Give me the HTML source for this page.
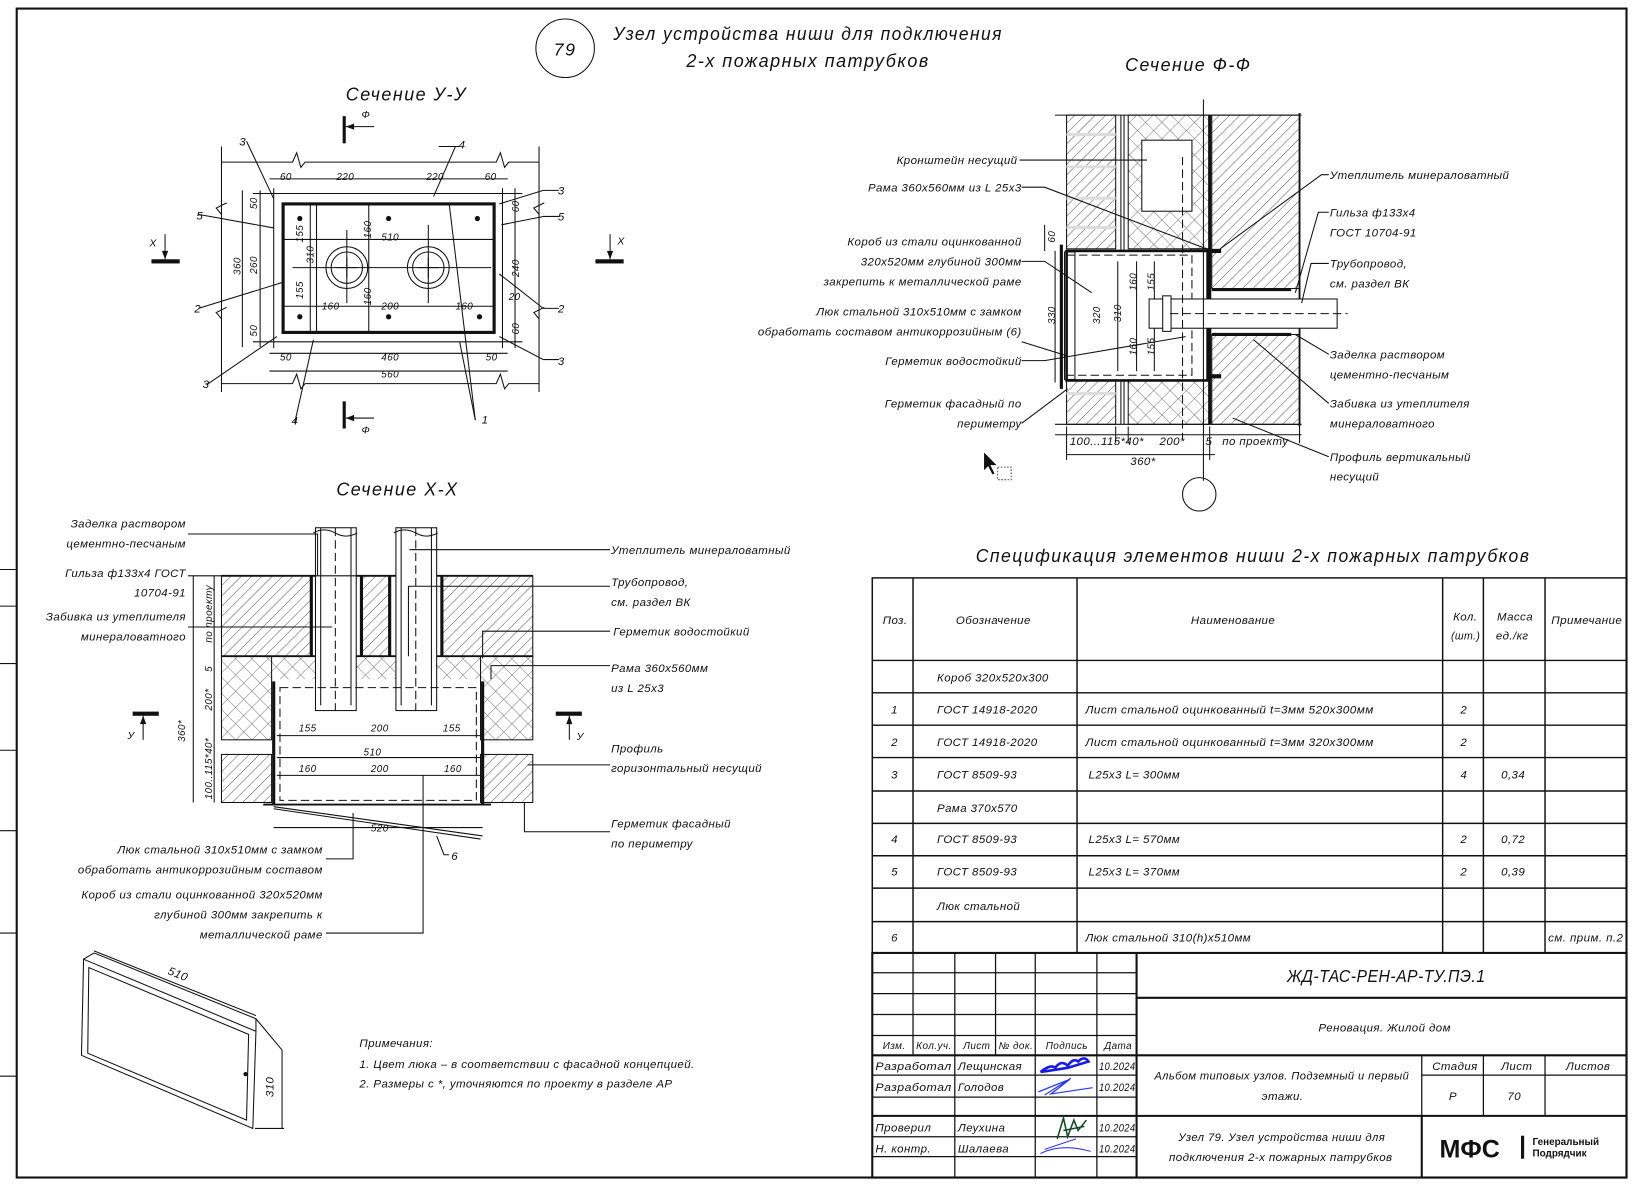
<!DOCTYPE html>
<html><head><meta charset="utf-8"><style>
html,body{margin:0;padding:0;background:#fff;}
svg{display:block;}
text{font-family:"Liberation Sans","DejaVu Sans",sans-serif;font-style:italic;fill:#111;letter-spacing:0.4px;}
.t{font-size:11px;}
.s{font-size:10px;}
.d{font-size:9.5px;}
.h{font-size:18px;letter-spacing:1.5px;}
.ln{stroke:#111;stroke-width:1;fill:none;}
.th{stroke:#111;stroke-width:3;fill:none;}
.md{stroke:#111;stroke-width:1.8;fill:none;}
.dash{stroke:#111;stroke-width:1;fill:none;stroke-dasharray:8 4;}
</style></head><body>
<svg width="1638" height="1184" viewBox="0 0 1568 1133" xmlns="http://www.w3.org/2000/svg">
<defs>
<pattern id="hh" width="7" height="7" patternUnits="userSpaceOnUse" patternTransform="rotate(45)"><line x1="0" y1="0" x2="0" y2="7" stroke="#333" stroke-width="0.8"/></pattern>
<pattern id="xx" width="11" height="11" patternUnits="userSpaceOnUse" patternTransform="rotate(45)"><line x1="0" y1="0" x2="0" y2="11" stroke="#444" stroke-width="0.7"/><line x1="0" y1="0" x2="11" y2="0" stroke="#444" stroke-width="0.7"/></pattern>
</defs>
<rect width="1568" height="1133" fill="#fff"/>
<rect x="16" y="8" width="1541" height="1119" fill="none" stroke="#111" stroke-width="2"/>
<g class="ln"><line x1="0" y1="545" x2="16" y2="545"/><line x1="0" y1="580" x2="16" y2="580"/><line x1="0" y1="635" x2="16" y2="635"/><line x1="0" y1="718" x2="16" y2="718"/><line x1="0" y1="795" x2="16" y2="795"/><line x1="0" y1="893" x2="16" y2="893"/><line x1="0" y1="1030" x2="16" y2="1030"/></g>

<circle cx="541" cy="46" r="28" class="ln"/>
<text x="530" y="53" class="h" style="font-size:17px">79</text>
<text x="587" y="38" class="h" textLength="373" lengthAdjust="spacingAndGlyphs">Узел устройства ниши для подключения</text>
<text x="657" y="64" class="h" textLength="233" lengthAdjust="spacingAndGlyphs">2-х пожарных патрубков</text>
<text x="331" y="96" class="h" textLength="116" lengthAdjust="spacingAndGlyphs">Сечение У-У</text>
<text x="1077" y="68" class="h" textLength="121" lengthAdjust="spacingAndGlyphs">Сечение Ф-Ф</text>
<text x="322" y="474" class="h" textLength="117" lengthAdjust="spacingAndGlyphs">Сечение Х-Х</text>
<text x="934" y="538" class="h" textLength="531" lengthAdjust="spacingAndGlyphs">Спецификация элементов ниши 2-х пожарных патрубков</text>

<g>
<line x1="212" y1="140" x2="212" y2="375" class="ln"/><line x1="516" y1="140" x2="516" y2="375" class="ln"/>
<path d="M212 155 H280 l4 -9 l4 14 l4 -5 H475 l4 -9 l4 14 l4 -5 H516" class="ln"/>
<path d="M212 367 H280 l4 -9 l4 14 l4 -5 H475 l4 -9 l4 14 l4 -5 H516" class="ln"/>
<path d="M212 205 l-5 -6 l10 -5" class="ln"/><path d="M516 205 l-5 -6 l10 -5" class="ln"/>
<path d="M212 305 l-5 -6 l10 -5" class="ln"/><path d="M516 305 l-5 -6 l10 -5" class="ln"/>
<rect x="271" y="195" width="202" height="123" class="th"/>
<line x1="242" y1="185" x2="500" y2="185" class="ln"/><line x1="242" y1="327" x2="500" y2="327" class="ln"/>
<line x1="262" y1="180" x2="262" y2="333" class="ln"/><line x1="481" y1="180" x2="481" y2="333" class="ln"/>
<circle cx="332" cy="256" r="20" class="ln"/><circle cx="332" cy="256" r="15" class="ln"/>
<circle cx="410" cy="256" r="20" class="ln"/><circle cx="410" cy="256" r="15" class="ln"/>
<line x1="322" y1="256" x2="342" y2="256" class="ln"/><line x1="332" y1="246" x2="332" y2="266" class="ln"/>
<line x1="400" y1="256" x2="420" y2="256" class="ln"/><line x1="410" y1="246" x2="410" y2="266" class="ln"/>
<line x1="332" y1="220" x2="332" y2="290" class="ln"/><line x1="410" y1="215" x2="410" y2="290" class="ln"/>
<line x1="280" y1="256" x2="470" y2="256" class="ln"/>
<line x1="272" y1="229" x2="472" y2="229" class="ln"/><line x1="272" y1="293" x2="472" y2="293" class="ln"/>
<line x1="258" y1="171" x2="486" y2="171" class="ln"/>
<line x1="258" y1="338" x2="486" y2="338" class="ln"/><line x1="258" y1="355" x2="486" y2="355" class="ln"/>
<line x1="232" y1="182" x2="232" y2="332" class="ln"/><line x1="249" y1="182" x2="249" y2="332" class="ln"/>
<line x1="297" y1="195" x2="297" y2="318" class="ln"/><line x1="303" y1="195" x2="303" y2="318" class="ln"/>
<line x1="353" y1="195" x2="353" y2="318" class="ln"/><line x1="493" y1="180" x2="493" y2="333" class="ln"/>
<g fill="#111"><circle cx="287" cy="209" r="2.5"/><circle cx="372" cy="209" r="2.5"/><circle cx="457" cy="209" r="2.5"/><circle cx="287" cy="303" r="2.5"/><circle cx="372" cy="303" r="2.5"/><circle cx="459" cy="303" r="2.5"/></g>
<g class="d"><text x="268" y="172">60</text><text x="322" y="172">220</text><text x="408" y="172">220</text><text x="464" y="172">60</text>
<text x="365" y="230">510</text><text x="308" y="296">160</text><text x="365" y="296">200</text><text x="436" y="296">160</text>
<text x="365" y="345">460</text><text x="365" y="361">560</text><text x="268" y="345">50</text><text x="465" y="345">50</text>
<text x="487" y="287">20</text></g>
<g class="d"><text transform="translate(230,263) rotate(-90)">360</text><text transform="translate(246,262) rotate(-90)">260</text><text transform="translate(246,200) rotate(-90)">50</text><text transform="translate(246,322) rotate(-90)">50</text>
<text transform="translate(300,252) rotate(-90)">310</text><text transform="translate(290,232) rotate(-90)">155</text><text transform="translate(290,286) rotate(-90)">155</text>
<text transform="translate(355,228) rotate(-90)">160</text><text transform="translate(355,292) rotate(-90)">160</text>
<text transform="translate(497,265) rotate(-90)">240</text><text transform="translate(497,203) rotate(-90)">60</text><text transform="translate(497,320) rotate(-90)">60</text></g>
<g class="ln"><path d="M236 135 L262 190"/><path d="M190 205 L262 218"/><path d="M190 295 L271 270"/><path d="M198 368 L265 322"/><path d="M282 405 L300 325"/>
<path d="M420 140 H440 M436 140 L415 188"/><path d="M455 402 L440 327"/><path d="M455 402 L430 195"/>
<path d="M520 182 H535 M520 182 L478 195"/><path d="M520 207 H535 M520 207 L480 215"/><path d="M520 295 H535 M520 295 L478 262"/><path d="M520 344 H535 M520 344 L478 322"/></g>
<g class="t"><text x="229" y="139">3</text><text x="188" y="210">5</text><text x="186" y="299">2</text><text x="194" y="371">3</text><text x="279" y="406">4</text><text x="439" y="142">4</text><text x="461" y="405">1</text>
<text x="534" y="186">3</text><text x="534" y="211">5</text><text x="534" y="299">2</text><text x="534" y="349">3</text></g>
<rect x="328" y="111" width="3" height="26" fill="#111"/><path d="M331 121 H358" class="ln"/><path d="M331 121 l8 -3 v6z" fill="#111"/><text x="346" y="113" class="s">Ф</text>
<rect x="328" y="384" width="3" height="26" fill="#111"/><path d="M331 400 H358" class="ln"/><path d="M331 400 l8 -3 v6z" fill="#111"/><text x="346" y="415" class="s">Ф</text>
<rect x="145" y="248" width="27" height="4" fill="#111"/><path d="M158 224 V248" class="ln"/><path d="M158 248 l-3 -8 h6z" fill="#111"/><text x="143" y="236" class="s">Х</text>
<rect x="570" y="248" width="27" height="4" fill="#111"/><path d="M584 224 V248" class="ln"/><path d="M584 248 l-3 -8 h6z" fill="#111"/><text x="591" y="234" class="s">Х</text>
</g>

<g>
<rect x="1021" y="110" width="47" height="128" fill="url(#hh)" stroke="#111"/>
<rect x="1021" y="362" width="47" height="44" fill="url(#hh)" stroke="#111"/>
<g fill="#ddd"><rect x="1021" y="127" width="47" height="3"/><rect x="1021" y="158" width="47" height="3"/><rect x="1021" y="188" width="47" height="3"/><rect x="1021" y="216" width="47" height="3"/><rect x="1021" y="375" width="47" height="3"/></g>
<rect x="1080" y="110" width="78" height="128" fill="url(#xx)" stroke="#111"/>
<rect x="1140" y="238" width="18" height="124" fill="url(#xx)" stroke="#111"/>
<rect x="1080" y="362" width="78" height="44" fill="url(#xx)" stroke="#111"/>
<rect x="1093" y="134" width="48" height="68" fill="#fff" stroke="#111"/>
<rect x="1160" y="110" width="84" height="166" fill="url(#hh)" stroke="#111"/>
<rect x="1160" y="320" width="84" height="86" fill="url(#hh)" stroke="#111"/>
<rect x="1160" y="276" width="76" height="44" fill="#fff"/>
<line x1="1158" y1="110" x2="1158" y2="406" class="th"/>
<line x1="1160" y1="277" x2="1236" y2="277" class="th"/><line x1="1160" y1="320" x2="1236" y2="320" class="th"/>
<line x1="1073" y1="110" x2="1073" y2="406" class="ln"/><line x1="1076" y1="110" x2="1076" y2="406" class="ln"/>
<line x1="1010" y1="110" x2="1246" y2="110" class="ln"/><line x1="1010" y1="406" x2="1246" y2="406" class="ln"/>
<line x1="1244" y1="108" x2="1244" y2="408" class="md"/>
<rect x="1021" y="240" width="135" height="124" fill="#fff" stroke="#111" stroke-width="2.5"/>
<rect x="1021" y="244" width="120" height="115" class="dash"/>
<line x1="1016" y1="234" x2="1016" y2="372" class="th"/>
<rect x="1019" y="241" width="10" height="122" class="ln"/>
<line x1="1105" y1="250" x2="1105" y2="355" class="ln"/><line x1="1088" y1="250" x2="1088" y2="355" class="ln"/><line x1="1070" y1="250" x2="1070" y2="355" class="ln"/>
<rect x="1100" y="286" width="180" height="28" fill="#fff" stroke="#111"/>
<rect x="1113" y="283" width="8" height="34" fill="#fff" stroke="#111"/>
<path d="M1120 300 H1290" class="dash"/>
<line x1="1132" y1="150" x2="1132" y2="420" class="dash"/>
<line x1="1152" y1="95" x2="1152" y2="460" class="ln"/>
<g fill="#111"><rect x="1155" y="238" width="14" height="4"/><rect x="1155" y="358" width="14" height="4"/></g>
<line x1="1010" y1="416" x2="1246" y2="416" class="ln"/><line x1="1021" y1="435" x2="1163" y2="435" class="ln"/>
<g class="ln"><line x1="1021" y1="408" x2="1021" y2="440"/><line x1="1068" y1="408" x2="1068" y2="424"/><line x1="1080" y1="408" x2="1080" y2="424"/><line x1="1158" y1="408" x2="1158" y2="440"/><line x1="1244" y1="408" x2="1244" y2="424"/></g>
<g class="t"><text x="1024" y="426">100...115*40*</text><text x="1110" y="426">200*</text><text x="1154" y="426">5</text><text x="1170" y="426">по проекту</text><text x="1082" y="445">360*</text></g>
<line x1="1010" y1="240" x2="1010" y2="366" class="ln"/><line x1="1000" y1="215" x2="1000" y2="240" class="ln"/>
<g class="d"><text transform="translate(1010,232) rotate(-90)">60</text><text transform="translate(1010,310) rotate(-90)">330</text><text transform="translate(1053,310) rotate(-90)">320</text><text transform="translate(1073,308) rotate(-90)">310</text>
<text transform="translate(1088,278) rotate(-90)">160</text><text transform="translate(1105,278) rotate(-90)">155</text><text transform="translate(1088,340) rotate(-90)">160</text><text transform="translate(1105,340) rotate(-90)">155</text></g>
<circle cx="1148" cy="473" r="16" class="ln"/>
<g class="ln"><path d="M976 153 H1098"/><path d="M978 179 H1000 L1160 240"/><path d="M978 250 H1000 L1045 280"/><path d="M978 327 L1020 340"/><path d="M978 345 H1000 L1135 322"/><path d="M978 405 L1022 372"/>
<path d="M1272 167 H1265 L1168 238"/><path d="M1272 203 H1262 L1240 280"/><path d="M1272 252 H1255 L1246 290"/><path d="M1272 339 L1240 320"/><path d="M1272 386 L1200 325"/><path d="M1272 437 L1180 400"/></g>
<g class="t" text-anchor="end"><text x="974" y="157">Кронштейн несущий</text><text x="978" y="183">Рама 360х560мм из L 25х3</text>
<text x="978" y="235">Короб из стали оцинкованной</text><text x="978" y="254">320х520мм глубиной 300мм</text><text x="978" y="273">закрепить к металлической раме</text>
<text x="978" y="302">Люк стальной 310х510мм с замком</text><text x="978" y="321">обработать составом антикоррозийным (6)</text>
<text x="978" y="349">Герметик водостойкий</text><text x="978" y="390">Герметик фасадный по</text><text x="978" y="409">периметру</text></g>
<g class="t"><text x="1273" y="171">Утеплитель минераловатный</text><text x="1273" y="207">Гильза ф133х4</text><text x="1273" y="226">ГОСТ 10704-91</text>
<text x="1273" y="256">Трубопровод,</text><text x="1273" y="275">см. раздел ВК</text><text x="1273" y="343">Заделка раствором</text><text x="1273" y="362">цементно-песчаным</text>
<text x="1273" y="390">Забивка из утеплителя</text><text x="1273" y="409">минераловатного</text><text x="1273" y="441">Профиль вертикальный</text><text x="1273" y="460">несущий</text></g>
<path d="M942 433 l0 17 l4 -4 l4 8 l2 -1 l-4 -8 l6 0z" fill="#111"/>
<rect x="955" y="447" width="13" height="12" fill="none" stroke="#555" stroke-dasharray="1.5 1.5"/>
</g>

<g>
<rect x="212" y="551" width="86" height="77" fill="url(#hh)" stroke="#111"/>
<rect x="346" y="551" width="27" height="77" fill="url(#hh)" stroke="#111"/>
<rect x="423" y="551" width="87" height="77" fill="url(#hh)" stroke="#111"/>
<rect x="212" y="628" width="48" height="80" fill="url(#xx)" stroke="#111"/>
<rect x="460" y="628" width="50" height="80" fill="url(#xx)" stroke="#111"/>
<rect x="260" y="628" width="42" height="22" fill="url(#xx)"/><rect x="341" y="628" width="38" height="22" fill="url(#xx)"/><rect x="418" y="628" width="42" height="22" fill="url(#xx)"/>
<rect x="212" y="722" width="48" height="46" fill="url(#hh)" stroke="#111"/>
<rect x="460" y="722" width="50" height="46" fill="url(#hh)" stroke="#111"/>
<line x1="212" y1="628" x2="510" y2="628" class="md"/>
<line x1="212" y1="551" x2="510" y2="551" class="md"/>
<line x1="298" y1="551" x2="298" y2="628" class="th"/><line x1="346" y1="551" x2="346" y2="628" class="th"/><line x1="373" y1="551" x2="373" y2="628" class="th"/><line x1="423" y1="551" x2="423" y2="628" class="th"/>
<rect x="302" y="505" width="39" height="175" fill="#fff" stroke="#111"/><rect x="379" y="505" width="39" height="175" fill="#fff" stroke="#111"/>
<line x1="307" y1="505" x2="307" y2="675" class="ln"/><line x1="336" y1="505" x2="336" y2="675" class="ln"/><line x1="384" y1="505" x2="384" y2="675" class="ln"/><line x1="413" y1="505" x2="413" y2="675" class="ln"/>
<line x1="321" y1="505" x2="321" y2="680" class="dash"/><line x1="398" y1="505" x2="398" y2="680" class="dash"/>
<path d="M300 510 q10 -6 21 0 q10 6 21 0" class="ln"/><path d="M377 510 q10 -6 21 0 q10 6 21 0" class="ln"/>
<line x1="262" y1="652" x2="262" y2="770" class="th"/><line x1="462" y1="652" x2="462" y2="770" class="th"/>
<rect x="268" y="658" width="188" height="108" class="dash"/>
<line x1="252" y1="770" x2="470" y2="770" class="md"/>
<path d="M262 772 L462 800" class="ln"/><path d="M262 774 L460 803" class="ln"/>
<g class="ln"><line x1="265" y1="704" x2="460" y2="704"/><line x1="265" y1="725" x2="460" y2="725"/><line x1="265" y1="742" x2="460" y2="742"/><line x1="262" y1="792" x2="462" y2="792"/>
<line x1="185" y1="551" x2="185" y2="768"/><line x1="205" y1="551" x2="205" y2="768"/></g>
<g class="d"><text x="286" y="700">155</text><text x="355" y="700">200</text><text x="424" y="700">155</text><text x="348" y="723">510</text><text x="286" y="739">160</text><text x="355" y="739">200</text><text x="425" y="739">160</text><text x="355" y="796">520</text>
<text transform="translate(203,615) rotate(-90)">по проекту</text><text transform="translate(203,643) rotate(-90)">5</text><text transform="translate(203,680) rotate(-90)">200*</text><text transform="translate(203,765) rotate(-90)">100..115*40*</text><text transform="translate(177,710) rotate(-90)">360*</text></g>
<rect x="127" y="681" width="25" height="4" fill="#111"/><path d="M137 685 V708" class="ln"/><path d="M137 685 l-3 8 h6z" fill="#111"/><text x="122" y="707" class="s">У</text>
<rect x="532" y="681" width="25" height="4" fill="#111"/><path d="M545 685 V708" class="ln"/><path d="M545 685 l-3 8 h6z" fill="#111"/><text x="552" y="708" class="s">У</text>
<g class="ln"><path d="M180 511 H304 V551"/><path d="M180 551 H378"/><path d="M180 600 H318"/>
<path d="M584 526 H392"/><path d="M584 561 H391 V628"/><path d="M584 604 H462 V630"/><path d="M584 637 H470 V650"/><path d="M584 732 H505"/><path d="M584 796 H502 V768"/>
<path d="M312 822 H338 V778"/><path d="M312 893 H405 V742"/><path d="M430 818 H425 L418 800"/></g>
<g class="t" text-anchor="end"><text x="178" y="505">Заделка раствором</text><text x="178" y="524">цементно-песчаным</text><text x="178" y="552">Гильза ф133х4 ГОСТ</text><text x="178" y="571">10704-91</text><text x="178" y="594">Забивка из утеплителя</text><text x="178" y="613">минераловатного</text>
<text x="309" y="817">Люк стальной 310х510мм с замком</text><text x="309" y="836">обработать антикоррозийным составом</text><text x="309" y="860">Короб из стали оцинкованной 320х520мм</text><text x="309" y="879">глубиной 300мм закрепить к</text><text x="309" y="898">металлической раме</text></g>
<g class="t"><text x="585" y="530">Утеплитель минераловатный</text><text x="585" y="561">Трубопровод,</text><text x="585" y="580">см. раздел ВК</text><text x="587" y="608">Герметик водостойкий</text><text x="585" y="643">Рама 360х560мм</text><text x="585" y="662">из L 25х3</text><text x="585" y="720">Профиль</text><text x="585" y="739">горизонтальный несущий</text><text x="585" y="792">Герметик фасадный</text><text x="585" y="811">по периметру</text><text x="432" y="823">6</text></g>
</g>

<g>
<path d="M80 918 L245 987 L242 1080 L78 1010 Z" class="ln"/>
<path d="M85 926 L238 990 L236 1072 L84 1008 Z" class="ln"/>
<path d="M90 912 L245 975 L245 987" class="ln"/><path d="M80 918 L90 912" class="ln"/>
<line x1="90" y1="910" x2="245" y2="972" class="ln"/>
<line x1="245" y1="975" x2="270" y2="1005" class="ln"/><line x1="270" y1="1005" x2="270" y2="1080" class="ln"/><line x1="244" y1="1080" x2="272" y2="1080" class="ln"/>
<circle cx="235" cy="1028" r="2" fill="#111"/>
<text transform="translate(160,932) rotate(22)" class="t">510</text>
<text transform="translate(262,1050) rotate(-90)" class="t">310</text>
</g>
<g class="t"><text x="344" y="1002">Примечания:</text><text x="344" y="1022">1. Цвет люка – в соответствии с фасадной концепцией.</text><text x="344" y="1041">2. Размеры с *, уточняются по проекту в разделе АР</text></g>

<g stroke="#111" stroke-width="1.4" fill="none">
<rect x="835" y="553" width="722" height="359"/>
<line x1="874" y1="553" x2="874" y2="912"/><line x1="1031" y1="553" x2="1031" y2="912"/><line x1="1381" y1="553" x2="1381" y2="912"/><line x1="1420" y1="553" x2="1420" y2="912"/><line x1="1479" y1="553" x2="1479" y2="912"/>
<line x1="835" y1="632" x2="1557" y2="632"/><line x1="835" y1="663" x2="1557" y2="663"/><line x1="835" y1="694" x2="1557" y2="694"/><line x1="835" y1="725" x2="1557" y2="725"/><line x1="835" y1="757" x2="1557" y2="757"/><line x1="835" y1="788" x2="1557" y2="788"/><line x1="835" y1="819" x2="1557" y2="819"/><line x1="835" y1="850" x2="1557" y2="850"/><line x1="835" y1="882" x2="1557" y2="882"/>
</g>
<g class="t">
<text x="845" y="597">Поз.</text><text x="915" y="597">Обозначение</text><text x="1140" y="597">Наименование</text><text x="1391" y="594">Кол.</text><text x="1389" y="612" textLength="28" lengthAdjust="spacingAndGlyphs">(шт.)</text><text x="1433" y="594">Масса</text><text x="1432" y="612">ед./кг</text><text x="1485" y="597" textLength="68" lengthAdjust="spacingAndGlyphs">Примечание</text>
<text x="897" y="652">Короб 320х520х300</text>
<text x="853" y="683">1</text><text x="897" y="683">ГОСТ 14918-2020</text><text x="1039" y="683" textLength="276" lengthAdjust="spacingAndGlyphs">Лист стальной оцинкованный t=3мм 520х300мм</text><text x="1398" y="683">2</text>
<text x="853" y="714">2</text><text x="897" y="714">ГОСТ 14918-2020</text><text x="1039" y="714" textLength="276" lengthAdjust="spacingAndGlyphs">Лист стальной оцинкованный t=3мм 320х300мм</text><text x="1398" y="714">2</text>
<text x="853" y="745">3</text><text x="897" y="745">ГОСТ 8509-93</text><text x="1042" y="745">L25х3  L= 300мм</text><text x="1398" y="745">4</text><text x="1437" y="745">0,34</text>
<text x="897" y="777">Рама 370х570</text>
<text x="853" y="807">4</text><text x="897" y="807">ГОСТ 8509-93</text><text x="1042" y="807">L25х3  L= 570мм</text><text x="1398" y="807">2</text><text x="1437" y="807">0,72</text>
<text x="853" y="838">5</text><text x="897" y="838">ГОСТ 8509-93</text><text x="1042" y="838">L25х3  L= 370мм</text><text x="1398" y="838">2</text><text x="1437" y="838">0,39</text>
<text x="897" y="871">Люк стальной</text>
<text x="853" y="901">6</text><text x="1039" y="901">Люк стальной 310(h)х510мм</text><text x="1482" y="901" textLength="72" lengthAdjust="spacingAndGlyphs">см. прим. п.2</text>
</g>

<g stroke="#111" fill="none">
<rect x="835" y="912" width="722" height="215" stroke-width="2"/>
<line x1="1088" y1="912" x2="1088" y2="1127" stroke-width="2"/>
<g stroke-width="1.2">
<line x1="874" y1="912" x2="874" y2="1010"/><line x1="914" y1="912" x2="914" y2="1127"/><line x1="953" y1="912" x2="953" y2="1010"/><line x1="991" y1="912" x2="991" y2="1127"/><line x1="1050" y1="912" x2="1050" y2="1127"/>
<line x1="835" y1="931" x2="1088" y2="931"/><line x1="835" y1="951" x2="1088" y2="951"/><line x1="835" y1="971" x2="1088" y2="971"/><line x1="835" y1="991" x2="1088" y2="991"/>
<line x1="835" y1="1029" x2="1088" y2="1029"/><line x1="835" y1="1050" x2="1088" y2="1050"/><line x1="835" y1="1088" x2="1088" y2="1088"/><line x1="835" y1="1107" x2="1088" y2="1107"/>
<line x1="1361" y1="1010" x2="1361" y2="1068"/><line x1="1420" y1="1010" x2="1420" y2="1068"/><line x1="1479" y1="1010" x2="1479" y2="1068"/><line x1="1361" y1="1029" x2="1557" y2="1029"/>
</g>
<g stroke-width="2"><line x1="835" y1="1010" x2="1557" y2="1010"/><line x1="835" y1="1068" x2="1557" y2="1068"/><line x1="1088" y1="955" x2="1557" y2="955"/><line x1="1361" y1="1068" x2="1361" y2="1127"/></g>
</g>
<g class="s" style="font-size:9.5px;letter-spacing:0">
<text x="845" y="1004">Изм.</text><text x="877" y="1004" textLength="34" lengthAdjust="spacingAndGlyphs">Кол.уч.</text><text x="922" y="1004">Лист</text><text x="956" y="1004" textLength="33" lengthAdjust="spacingAndGlyphs">№ док.</text><text x="1001" y="1004">Подпись</text><text x="1057" y="1004">Дата</text></g>
<g class="t" style="font-size:11px;letter-spacing:0">
<text x="838" y="1024" textLength="73" lengthAdjust="spacingAndGlyphs">Разработал</text><text x="917" y="1024">Лещинская</text><text x="1052" y="1024" textLength="35" lengthAdjust="spacingAndGlyphs">10.2024</text>
<text x="838" y="1044" textLength="73" lengthAdjust="spacingAndGlyphs">Разработал</text><text x="917" y="1044">Голодов</text><text x="1052" y="1044" textLength="35" lengthAdjust="spacingAndGlyphs">10.2024</text>
<text x="838" y="1083">Проверил</text><text x="917" y="1083">Леухина</text><text x="1052" y="1083" textLength="35" lengthAdjust="spacingAndGlyphs">10.2024</text>
<text x="838" y="1103">Н. контр.</text><text x="917" y="1103">Шалаева</text><text x="1052" y="1103" textLength="35" lengthAdjust="spacingAndGlyphs">10.2024</text></g>
<path d="M996 1026 q10 -8 14 -4 q6 -8 12 -2 q6 -8 10 -4 q6 -6 10 0 l-20 6 q-12 2 -26 4" stroke="#1a1ae0" stroke-width="2.5" fill="none"/>
<path d="M994 1045 l30 -12 l-18 14 l40 -6 M1000 1048 l25 -16" stroke="#2a3ae8" stroke-width="1.2" fill="none"/>
<path d="M1012 1090 l6 -20 l4 18 l6 -16 l4 10 l8 -10 M1018 1082 l20 -4" stroke="#1a4a2a" stroke-width="1.5" fill="none"/>
<path d="M996 1104 q20 -10 48 -2 M1000 1100 l30 -10" stroke="#3a3ae0" stroke-width="1" fill="none"/>
<text x="1232" y="940" style="font-size:17px;letter-spacing:0.5px" textLength="190" lengthAdjust="spacingAndGlyphs">ЖД-ТАС-РЕН-АР-ТУ.ПЭ.1</text>
<g class="t">
<text x="1262" y="987">Реновация. Жилой дом</text>
<text x="1105" y="1033" textLength="244" lengthAdjust="spacingAndGlyphs">Альбом типовых узлов. Подземный и первый</text><text x="1208" y="1053">этажи.</text>
<text x="1371" y="1024">Стадия</text><text x="1437" y="1024">Лист</text><text x="1499" y="1024">Листов</text>
<text x="1387" y="1053">Р</text><text x="1443" y="1053">70</text>
<text x="1128" y="1092" textLength="198" lengthAdjust="spacingAndGlyphs">Узел 79. Узел устройства ниши для</text><text x="1119" y="1111" textLength="214" lengthAdjust="spacingAndGlyphs">подключения 2-х пожарных патрубков</text></g>
<text x="1378" y="1108" style="font-family:'Liberation Sans',sans-serif;font-style:normal;font-weight:bold;font-size:24px;letter-spacing:0">МФС</text>
<rect x="1456" y="1087" width="3" height="22" fill="#111"/>
<text x="1467" y="1096" style="font-style:normal;font-weight:bold;font-size:9.5px;letter-spacing:0">Генеральный</text>
<text x="1467" y="1107" style="font-style:normal;font-weight:bold;font-size:9.5px;letter-spacing:0">Подрядчик</text>
</svg>
</body></html>
